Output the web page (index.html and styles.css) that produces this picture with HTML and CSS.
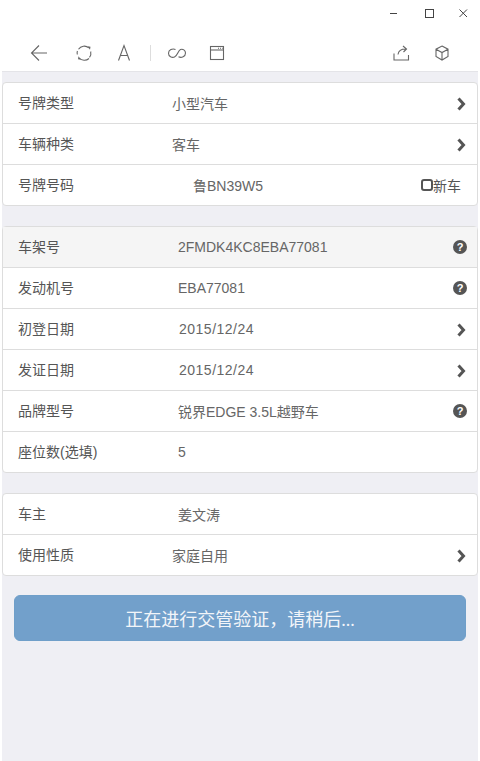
FILE: index.html
```html
<!DOCTYPE html>
<html lang="zh-CN">
<head>
    <meta charset="UTF-8">
    <title>车辆信息</title>
    <link rel="stylesheet" href="styles.css">
</head>
<body>
    <div class="titlebar">
        <svg class="winicon" viewBox="0 0 14 14"><path d="M2 7.500h7"/></svg>
        <svg class="winicon" viewBox="0 0 14 14"><rect x="3.500" y="3.500" width="8" height="8"/></svg>
        <svg class="winicon" viewBox="0 0 14 14"><path d="M3.500 3.500l7.500 7.500M11 3.500l-7.500 7.500"/></svg>
    </div>
    <div class="toolbar">
        <svg class="tool tool-back" viewBox="0 0 20 20"><path d="M18 10H2.500M10 2.500L2.500 10l7.500 7.500"/></svg>
        <svg class="tool tool-reload" viewBox="0 0 20 20"><path d="M4.500 6.300A7 7 0 0 1 14.800 4.800M16.700 8.500A7 7 0 0 1 15.500 14.300M15 15.500A7 7 0 0 1 5.200 15M3.300 11.500A7 7 0 0 1 3.400 8"/><path class="solid" d="M13.500 3.300l3 .5-.5 3zM7 16.800l-3-.5.5-3z"/></svg>
        <svg class="tool tool-font" viewBox="0 0 20 20"><path d="M4.500 17.500L10 2.500l5.500 15M6.300 12.500h7.400"/></svg>
        <span class="tool-sep"></span>
        <svg class="tool tool-link" viewBox="0 0 20 20"><path d="M8.500 6.500c-3-1.500-7 .5-7 3.800 0 3.200 3.500 4.700 6 3.700 3-1.200 3.500-6.500 6-7.500 2.300-.9 5 .8 5 3.500 0 3.500-4 5.200-7 3.800"/></svg>
        <svg class="tool tool-win" viewBox="0 0 20 20"><rect x="3.500" y="3.500" width="13" height="13"/><path d="M3.500 7h13"/><path d="M11 5.300h1M13 5.300h1M15 5.300h.8"/></svg>
        <span class="tool-space"></span>
        <svg class="tool tool-share" viewBox="0 0 20 20"><path d="M3 10.500v6.500h14.500v-5"/><path d="M7 11.500c.5-3.500 3-5.500 7.500-5.500M12 3l3.500 3-3 3"/></svg>
        <svg class="tool tool-box" viewBox="0 0 20 20"><path d="M10 3l6 3.200v7.300L10 17l-6-3.500V6.200zM4 6.200l6 3.300 6-3.300M10 9.500V17"/></svg>
    </div>
    <div class="content">
        <div class="group">
            <div class="row"><span class="label">号牌类型</span><span class="value value-select">小型汽车</span><svg class="chevron" viewBox="0 0 10 14"><path d="M2.500 1.500L7.500 7l-5 5.500"/></svg></div>
            <div class="row"><span class="label">车辆种类</span><span class="value value-select">客车</span><svg class="chevron" viewBox="0 0 10 14"><path d="M2.500 1.500L7.500 7l-5 5.500"/></svg></div>
            <div class="row"><span class="label">号牌号码</span><span class="value value-plate">鲁BN39W5</span><span class="newcar"><span class="checkbox"></span>新车</span></div>
        </div>
        <div class="group">
            <div class="row row-active"><span class="label">车架号</span><span class="value">2FMDK4KC8EBA77081</span><span class="help">?</span></div>
            <div class="row"><span class="label">发动机号</span><span class="value">EBA77081</span><span class="help">?</span></div>
            <div class="row"><span class="label">初登日期</span><span class="value value-date">2015/12/24</span><svg class="chevron" viewBox="0 0 10 14"><path d="M2.500 1.500L7.500 7l-5 5.500"/></svg></div>
            <div class="row"><span class="label">发证日期</span><span class="value value-date">2015/12/24</span><svg class="chevron" viewBox="0 0 10 14"><path d="M2.500 1.500L7.500 7l-5 5.500"/></svg></div>
            <div class="row"><span class="label">品牌型号</span><span class="value">锐界EDGE 3.5L越野车</span><span class="help">?</span></div>
            <div class="row"><span class="label">座位数(选填)</span><span class="value">5</span></div>
        </div>
        <div class="group">
            <div class="row"><span class="label">车主</span><span class="value">姜文涛</span></div>
            <div class="row"><span class="label">使用性质</span><span class="value value-select">家庭自用</span><svg class="chevron" viewBox="0 0 10 14"><path d="M2.500 1.500L7.500 7l-5 5.500"/></svg></div>
        </div>
        <button class="submit">正在进行交管验证，请稍后...</button>
    </div>
</body>
</html>
```

FILE: styles.css
```css
* {
    box-sizing: border-box;
}

html, body {
    height: 100%;
}

body {
    margin: 0;
    background: #fff;
    font-family: "Liberation Sans", "Noto Sans CJK SC", sans-serif;
    font-size: 14px;
    color: #555;
    display: flex;
    flex-direction: column;
}

.titlebar {
    height: 28px;
    display: flex;
    justify-content: flex-end;
    align-items: flex-start;
    gap: 20px;
    padding: 6px 10px 0 0;
}

.winicon {
    width: 14px;
    height: 14px;
    fill: none;
    stroke: #444;
    stroke-width: 1;
}

.toolbar {
    height: 44px;
    display: flex;
    align-items: center;
    padding: 6px 28px 0 29px;
}

.tool {
    width: 20px;
    height: 20px;
    flex: none;
    fill: none;
    stroke: #666;
    stroke-width: 1.100;
}

.tool .solid {
    fill: #666;
    stroke: none;
}

.tool-reload {
    margin-left: 25px;
}

.tool-font {
    margin-left: 20px;
}

.tool-sep {
    width: 1px;
    height: 16px;
    background: #ddd;
    margin-left: 16px;
}

.tool-link {
    margin-left: 16px;
}

.tool-win {
    margin-left: 20px;
}

.tool-space {
    flex: 1;
}

.tool-box {
    margin-left: 21px;
}

.content {
    flex: 1;
    margin: 0 2px;
    padding-top: 10px;
    background: #efeff4;
    box-shadow: 0 -1px 0 #e4e4e8;
}

.group {
    margin-bottom: 20px;
    background: #fff;
    border: 1px solid #ddd;
    border-radius: 4px;
}

.row {
    height: 41px;
    display: flex;
    align-items: center;
    padding: 0 11px 0 15px;
    border-bottom: 1px solid #ddd;
}

.row:last-child {
    height: 40px;
    border-bottom: 0;
}

.row-active {
    background: #f5f5f5;
}

.label {
    width: 157px;
    flex: none;
    margin-top: -2px;
}

.value {
    flex: 1;
    padding-left: 3px;
    color: #666;
}

.value-select {
    padding-left: 0;
    margin-left: -3px;
}

.value-date {
    padding-left: 4px;
    letter-spacing: .5px;
}

.value-plate {
    padding-left: 18px;
    margin-top: -1px;
}

.chevron {
    width: 10px;
    height: 14px;
    margin-top: 1px;
    fill: none;
    stroke: #555;
    stroke-width: 3;
}

.help {
    width: 14px;
    height: 14px;
    margin-right: -1px;
    border-radius: 50%;
    background: #555;
    color: #fff;
    font-size: 11px;
    font-weight: bold;
    line-height: 14px;
    text-align: center;
}

.newcar {
    display: flex;
    align-items: center;
    margin: 0 5px 0 0;
}

.checkbox {
    width: 12px;
    height: 12px;
    border: 2px solid #555;
    border-radius: 3px;
}

.submit {
    display: block;
    width: 452px;
    height: 46px;
    margin: -1px 12px 0;
    border: 1px solid #6f9fc9;
    border-radius: 6px;
    background: #72a0cb;
    color: #f2f5f9;
    font-family: "Liberation Serif", "Noto Sans CJK SC", sans-serif;
    font-size: 18px;
}
```
